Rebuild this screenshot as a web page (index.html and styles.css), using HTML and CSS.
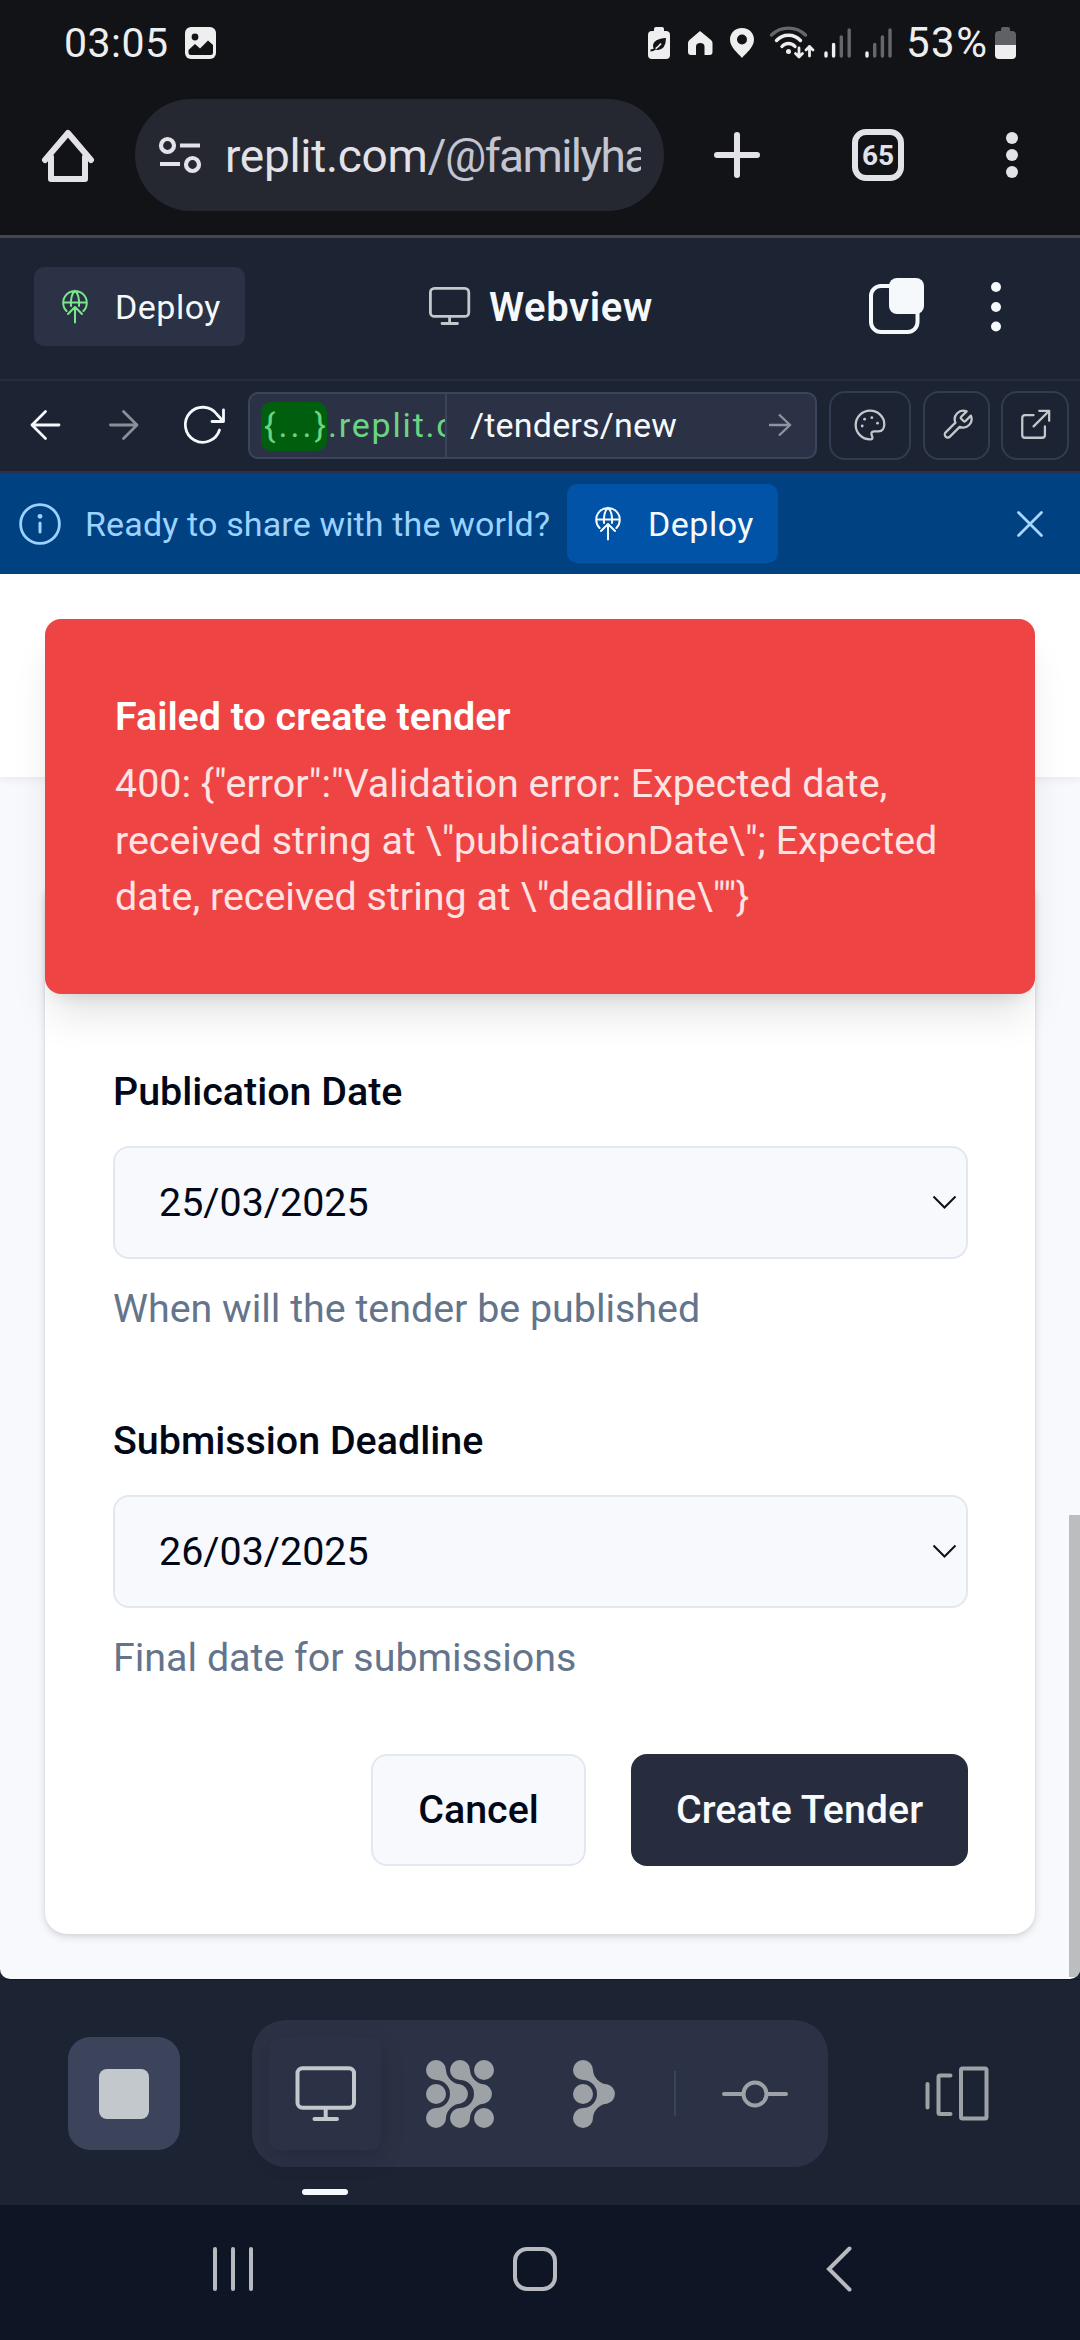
FILE: index.html
```html
<!DOCTYPE html>
<html lang="en">
<head>
<meta charset="utf-8">
<title>Webview</title>
<link rel="stylesheet" href="styles.css">
</head>
<body>
<svg class="defs" width="0" height="0" aria-hidden="true">
  <symbol id="globe" viewBox="0 0 26 35">
    <g fill="none" stroke="currentColor" stroke-width="2" stroke-linecap="round" stroke-linejoin="round">
      <path d="M4.600 22A11.800 11.800 0 1 1 21.400 22M1.500 13.600H24.500M13 1.800C9.500 5 8.500 10 9 17M13 1.800C16.500 5 17.500 10 17 17M13 33.500V18.500M6 25L13 18L20 25"/>
    </g>
  </symbol>
  <symbol id="branch" viewBox="0 0 44 68" overflow="visible">
    <circle cx="10" cy="10" r="10"/><circle cx="10" cy="58" r="10"/>
    <path d="M20 10C20 17 27 24.300 34 24.300A9.900 9.900 0 0 1 34 43.700C27 43.700 20 51 20 58L10 48A14 14 0 0 0 10 20Z"/>
  </symbol>
</svg>

<header class="status">
  <span class="clock">03:05</span>
  <svg class="gallery" width="31" height="32" viewBox="0 0 31 32"><rect width="31" height="32" rx="6" fill="#eee"/><circle cx="10" cy="10" r="3.400" fill="#121317"/><path d="M3.500 23L10 17L15 21.500L23 13.500L28 18V25.500Q28 28 25.500 28H6Q3.500 28 3.500 25.500Z" fill="#121317"/></svg>
  <svg class="tray" width="255" height="36" viewBox="646 25 255 36">
    <g fill="#eee">
      <path d="M654 29Q654 27 656 27H662Q664 27 664 29V31H666Q670 31 670 35V55Q670 59 666 59H652Q648 59 648 55V35Q648 31 652 31H654Z"/>
      <path d="M700 31L711 40Q712.500 41.500 712.500 43V52Q712.500 55 709.500 55H704.500V46.500Q704.500 43 700.200 43Q696 43 696 46.500V55H691Q688 55 688 52V43Q688 41.500 689.500 40Z"/>
      <path fill-rule="evenodd" d="M742 28C734.500 28 730 33.500 730 39.500C730 47.500 738 53 742 58C746 53 754 47.500 754 39.500C754 33.500 749.500 28 742 28ZM742 34.500A5 5 0 1 0 742 44.500A5 5 0 1 0 742 34.500Z"/>
      <circle cx="788.500" cy="51.500" r="2.500"/>
    </g>
    <path d="M666 38C658 38.500 653 41 653 46Q653 50 658 50Q666 49 666 38Z" fill="#121317"/><path d="M650.500 50.500Q656 50 661 43.500" stroke="#eee" stroke-width="1.600" fill="none"/><path d="M650.500 50.500Q653 50.500 655.500 48.500" stroke="#121317" stroke-width="2" fill="none"/>
    <g fill="none" stroke-width="3.400" stroke-linecap="round" stroke-linejoin="round" stroke="#eee">
      <path d="M771.500 35C781 25.800 796 25.800 805.500 35" stroke="#66676a"/>
      <path d="M776.500 40.500C783 33.500 794 33.500 800.500 40.500M782 46.500C785.500 42.500 791.500 42.500 795 46.500"/>
      <path d="M799 48V57M795.500 53.500L799 57L802.500 53.500M809.500 56V46.500M806 50L809.500 46.500L813 50" stroke-width="2.800"/>
      <path d="M826 53V56M833.600 44.500V56" /><path d="M841.300 37V56M849.200 30V56" stroke="#66676a"/>
      <path d="M867 53V56"/><path d="M874.700 44.500V56M882.400 37V56M890 30V56" stroke="#66676a"/>
    </g>
  </svg>
  <span class="percent">53%</span>
  <svg width="21" height="32" viewBox="0 0 21 32"><path d="M6 2Q6 0 8 0H13Q15 0 15 2V4H17Q21 4 21 8V18H0V8Q0 4 4 4H6Z" fill="#606164"/><path d="M0 18H21V28Q21 32 17 32H4Q0 32 0 28Z" fill="#eee"/></svg>
</header>

<nav class="chrome">
  <svg class="home" width="54" height="54" viewBox="41 129 54 54"><path d="M51 158V180H85V158M45 161L68 134L91 161" fill="none" stroke="#e3e2e8" stroke-width="6" stroke-linecap="round" stroke-linejoin="round"/></svg>
  <div class="url">
    <svg width="44" height="38" viewBox="158 137 44 38"><g fill="none" stroke="#e3e2e8" stroke-width="4.200"><circle cx="167.500" cy="146.500" r="6.500"/><circle cx="192.500" cy="165.500" r="6.500"/><path d="M180 146.500H200M160 165H180"/></g></svg>
    <span class="address">replit.com<span class="path">/@familyha</span></span>
  </div>
  <svg class="plus" width="48" height="48" viewBox="0 0 48 48"><path d="M24 4V44M4 24H44" stroke="#e3e2e8" stroke-width="6" stroke-linecap="round"/></svg>
  <span class="tabs">65</span>
  <svg class="more" width="14" height="50" viewBox="0 0 14 50" fill="#e3e2e8"><circle cx="7" cy="8" r="6"/><circle cx="7" cy="25" r="6"/><circle cx="7" cy="42" r="6"/></svg>
</nav>

<div class="titlebar">
  <button class="deploy"><svg class="green" width="26" height="35"><use href="#globe"/></svg>Deploy</button>
  <svg class="screen" width="42" height="39" viewBox="0 0 42 39"><g fill="none" stroke="#c2c8cc" stroke-width="2.800" stroke-linecap="round"><rect x="1.400" y="1.400" width="38.400" height="28" rx="4"/><path d="M20.600 30V36M13 36.500H28.500"/></g></svg>
  <h1>Webview</h1>
  <svg class="copy" width="57" height="60" viewBox="868 277 57 60"><rect x="871" y="286" width="46.500" height="46" rx="10" fill="none" stroke="#f5f9fc" stroke-width="4"/><rect x="889" y="278" width="35" height="36" rx="8" fill="#f5f9fc"/></svg>
  <svg class="dots" width="12" height="52" viewBox="0 0 12 52" fill="#f5f9fc"><circle cx="6" cy="6" r="5"/><circle cx="6" cy="26" r="5"/><circle cx="6" cy="45.500" r="5"/></svg>
</div>

<div class="browse">
  <svg class="ctl" width="197" height="42" viewBox="30 406 197 42"><g fill="none" stroke-width="2.800" stroke-linecap="round" stroke-linejoin="round"><path d="M59 427H32M45.500 413.500L32 427L45.500 440.500" stroke="#f5f9fc"/><path d="M110.500 427H137M123.500 413.500L137 427L123.500 440.500" stroke="#8b8f99"/><path d="M219.500 432A17.500 17.500 0 1 1 217 416.500L223 423M223.500 412V423.500H212" stroke="#f5f9fc"/></g></svg>
  <div class="field">
    <div class="host"><span class="chip">{...}</span>.replit.c</div>
    <div class="route">/tenders/new<svg width="24" height="24" viewBox="0 0 24 24"><path d="M1 12H22M11 1.500L22 12L11 22.500" fill="none" stroke="#8f949e" stroke-width="2.300"/></svg></div>
  </div>
  <span class="tool wide"><svg width="34" height="34" viewBox="0 0 24 24"><path d="M12 1.900a10.100 10.100 0 1 0 0 20.200c1.500.3 2-.8 1.600-1.800-.9-2-1-3.800 1.300-3.800H18c2.700 0 4.100-2.200 4.100-5C22.100 6 17.500 1.900 12 1.900Z"/><g class="specks"><circle cx="8.200" cy="7.900" r="1"/><circle cx="13.300" cy="6.800" r="1"/><circle cx="17.300" cy="10.700" r="1"/><circle cx="6.500" cy="12.700" r="1"/></g></svg></span>
  <span class="tool mid"><svg width="34" height="34" viewBox="0 0 24 24"><path d="M15 6.200a1 1 0 0 0 0 1.400l1.600 1.600a1 1 0 0 0 1.400 0l3.800-3.800a6 6 0 0 1-7.900 7.900l-6.900 6.900a2.100 2.100 0 0 1-3-3l6.900-6.900a6 6 0 0 1 7.900-7.900Z"/></svg></span>
  <span class="tool end"><svg width="34" height="34" viewBox="0 0 24 24"><path d="M19 13v6a2 2 0 0 1-2 2H5a2 2 0 0 1-2-2V7a2 2 0 0 1 2-2h6M15 2h7v7M11 13 21.500 2.500"/></svg></span>
</div>

<div class="notice">
  <svg width="42" height="42" viewBox="0 0 42 42"><circle cx="21" cy="21" r="19.400" fill="none" stroke="#9cd2ff" stroke-width="2.800"/><circle cx="21" cy="13.300" r="2.400" fill="#9cd2ff"/><path d="M21 20V29" stroke="#9cd2ff" stroke-width="3" stroke-linecap="round"/></svg>
  <span class="share">Ready to share with the world?</span>
  <button class="deploy blue"><svg width="26" height="35"><use href="#globe"/></svg>Deploy</button>
  <svg class="close" width="28" height="28" viewBox="0 0 28 28"><path d="M2.500 2.500L25.500 25.500M25.500 2.500L2.500 25.500" stroke="#a8d6ff" stroke-width="2.800" stroke-linecap="round"/></svg>
</div>

<div class="frame">
  <div class="view">
    <div class="apphead"></div>
    <form class="card">
      <label>Publication Date</label>
      <div class="date">25/03/2025<svg width="25" height="15" viewBox="0 0 25 15"><path d="M1.500 1.500L12.500 12.500L23.500 1.500" fill="none" stroke="#111" stroke-width="2"/></svg></div>
      <p>When will the tender be published</p>
      <label>Submission Deadline</label>
      <div class="date">26/03/2025<svg width="25" height="15" viewBox="0 0 25 15"><path d="M1.500 1.500L12.500 12.500L23.500 1.500" fill="none" stroke="#111" stroke-width="2"/></svg></div>
      <p>Final date for submissions</p>
      <div class="actions"><button class="btn" type="button">Cancel</button><button class="btn primary" type="button">Create Tender</button></div>
    </form>
    <div class="toast" role="alert">
      <strong>Failed to create tender</strong>
      <div class="detail">400: {"error":"Validation error: Expected date,<br>received string at \"publicationDate\"; Expected<br>date, received string at \"deadline\""}</div>
    </div>
    <div class="thumb"></div>
  </div>
</div>

<div class="dock">
  <span class="stop"><span class="square"></span></span>
  <div class="group">
    <span class="selected"><svg width="61" height="58" viewBox="294 2065 61 58"><g fill="none" stroke="#c2c8cc" stroke-width="4" stroke-linecap="round"><rect x="296.500" y="2068.300" width="56.500" height="39.500" rx="5"/><path d="M324.700 2109V2118M313.500 2119H336"/></g></svg></span>
    <svg class="grid" width="68" height="68" viewBox="0 0 68 68" fill="#9da2a6"><use href="#branch" width="44" height="68"/><use href="#branch" x="24" width="44" height="68"/><circle cx="10" cy="34" r="10"/><circle cx="58" cy="10" r="10"/><circle cx="58" cy="58" r="10"/></svg>
    <svg class="tree" width="44" height="68" viewBox="0 0 44 68" fill="#9da2a6"><use href="#branch" width="44" height="68"/><circle cx="10" cy="34" r="10"/></svg>
    <span class="rule"></span>
    <svg class="commit" width="66" height="30" viewBox="0 0 66 30"><g fill="none" stroke="#9da2a6" stroke-width="4" stroke-linecap="round"><circle cx="33" cy="15" r="11.500"/><path d="M2 15H20M46 15H64"/></g></svg>
  </div>
  <svg class="panes" width="66" height="58" viewBox="924 2065 66 58"><g fill="none" stroke="#9da2a6" stroke-width="4" stroke-linecap="round" stroke-linejoin="round"><rect x="961" y="2068.500" width="25.500" height="50" rx="1.500"/><path d="M950.500 2075.500H940Q938.500 2075.500 938.500 2077V2112.500Q938.500 2114 940 2114H950.500M927.500 2084V2107.500"/></g></svg>
  <span class="indicator"></span>
</div>

<footer class="system">
  <svg width="40" height="44" viewBox="0 0 40 44"><path d="M2 2V42M20 2V42M38 2V42" stroke="#b9bac0" stroke-width="4" stroke-linecap="round"/></svg>
  <svg class="s2" width="44" height="44" viewBox="0 0 44 44"><rect x="2" y="2" width="40" height="40" rx="12" fill="none" stroke="#b9bac0" stroke-width="4"/></svg>
  <svg class="s3" width="26" height="46" viewBox="0 0 26 46"><path d="M23.500 2.500L3 23L23.500 43.500" fill="none" stroke="#b9bac0" stroke-width="4" stroke-linecap="round"/></svg>
</footer>
</body>
</html>
```
FILE: styles.css
```css
* { box-sizing: border-box; }
body {
  margin: 0;
  width: 1080px;
  height: 2340px;
  overflow: hidden;
  background: #121317;
  font-family: Roboto, "Liberation Sans", sans-serif;
}
svg { display: block; flex: none; }
.defs { position: absolute; }
button { border: 0; font: inherit; color: inherit; padding: 0; }

.status { display: flex; align-items: center; height: 85px; padding-left: 64px; color: #eee; font-size: 41px; white-space: nowrap; }
.clock { width: 121px; letter-spacing: .5px; }
.tray { margin-left: 430px; }
.percent { width: 94px; padding-left: 5px; font-size: 42px; letter-spacing: 1.500px; }

.chrome { display: flex; align-items: center; height: 153px; padding: 0 0 11px 41px; border-bottom: 3px solid #45474e; }
.url { display: flex; align-items: center; width: 529px; height: 112px; border-radius: 56px; margin-left: 40px; padding-left: 23px; background: #252830; }
.address { width: 416px; margin-left: 23px; padding-top: 3px; overflow: hidden; white-space: nowrap; font-size: 46px; line-height: 60px; letter-spacing: -.300px; color: #e3e2e8; }
.path { color: #c3c5d0; letter-spacing: -1.600px; }
.plus { margin-left: 49px; }
.tabs { width: 52px; height: 52px; margin-left: 91px; border: 6px solid #e3e2e8; border-radius: 14px; color: #e3e2e8; font-size: 28px; font-weight: 700; line-height: 41px; text-align: center; }
.more { margin-left: 101px; }

.titlebar { display: flex; align-items: center; height: 143px; padding: 0 0 4px 34px; background: #1c2333; border-bottom: 2px solid #262d3d; }
.deploy { display: flex; align-items: center; width: 211px; height: 79px; padding-left: 28px; gap: 27px; border-radius: 10px; background: #2b3245; color: #f5f9fc; font-size: 34px; letter-spacing: .5px; }
.green { color: #79e78b; }
.screen { margin-left: 184px; }
.titlebar h1 { width: 180px; margin: 3px 0 0 18px; font-size: 40px; font-weight: 600; line-height: 50px; letter-spacing: .6px; color: #f5f9fc; }
.copy { margin-left: 199px; }
.dots { margin-left: 65px; }

.browse { display: flex; align-items: center; height: 92px; padding: 0 0 2px 30px; background: #1c2333; border-bottom: 2px solid #2b3245; }
.field { display: flex; width: 569px; height: 67px; margin-left: 21px; border: 2px solid #3c445c; border-radius: 10px; background: #2b3245; font-size: 34px; line-height: 63px; white-space: nowrap; }
.host { width: 197px; padding-left: 11px; overflow: hidden; border-right: 2px solid #3c445c; color: #6cd481; letter-spacing: 1.800px; }
.chip { display: inline-block; width: 66px; height: 49px; margin-right: 1px; border-radius: 10px; line-height: 47px; text-align: center; letter-spacing: 3px; text-indent: 3px; background: #005f0e; }
.route { display: flex; align-items: center; justify-content: space-between; flex: 1; padding: 0 23px 0 23px; color: #f5f9fc; letter-spacing: .2px; }
.tool { display: flex; align-items: center; justify-content: center; height: 69px; border: 2px solid #333b50; border-radius: 16px; }
.tool svg { fill: none; stroke: #c2c8cc; stroke-width: 1.600; stroke-linecap: round; stroke-linejoin: round; }
.tool .specks { fill: #c2c8cc; stroke: none; }
.wide { width: 82px; margin-left: 12px; }
.mid { width: 67px; margin-left: 12px; }
.end { width: 68px; margin-left: 11px; }

.notice { display: flex; align-items: center; height: 101px; padding-left: 19px; background: #004182; }
.share { width: 482px; margin-left: 24px; color: #9cd2ff; font-size: 34px; white-space: nowrap; letter-spacing: .15px; }
.blue { background: #0053a6; }
.close { margin-left: 238px; }

.frame { height: 1405px; background: #1c2333; }
.view { position: relative; height: 1405px; overflow: hidden; border-radius: 0 0 10px 10px; background: #f8f9fd; }
.apphead { height: 203px; background: #fff; box-shadow: 0 3px 8px rgba(0, 0, 0, .06); }
.card { width: 990px; height: 1057px; margin: 100px 45px 0; padding: 187px 68px 0; border-radius: 22px; background: #fff; box-shadow: 0 3px 8px rgba(0, 0, 0, .13), 0 1px 4px rgba(0, 0, 0, .06); font-size: 39.400px; line-height: 56px; color: #020817; }
.card label { display: block; font-weight: 500; margin-bottom: 26px; }
.date { display: flex; align-items: center; justify-content: space-between; width: 855px; height: 113px; padding: 0 9px 0 44px; border: 2px solid #e2e8f0; border-radius: 16px; background: #f8f9fd; }
.card p { margin: 22px 0 76px; color: #64748b; }
.card p + .actions { margin-top: -8px; }
.actions { display: flex; justify-content: flex-end; width: 855px; gap: 45px; }
.btn { width: 215px; height: 112px; border: 2px solid #e2e8f0; border-radius: 16px; background: #f8f9fd; font-weight: 500; }
.primary { width: 337px; border: 0; background: #272d3f; color: #f8fafc; }
.toast { position: absolute; left: 45px; top: 45px; width: 990px; height: 375px; padding: 70px; border-radius: 16px; background: #ef4444; box-shadow: 0 28px 42px -8px rgba(0, 0, 0, .11), 0 11px 17px -11px rgba(0, 0, 0, .15); color: #fff; font-size: 39.400px; line-height: 56.250px; white-space: nowrap; }
.toast strong { display: block; font-weight: 600; margin-bottom: 11px; }
.detail { color: #fde4e4; }
.thumb { position: absolute; right: 0; top: 941px; width: 11px; height: 462px; background: #bbbdbf; }

.dock { position: relative; display: flex; height: 226px; padding: 41px 0 0 68px; background: #1c2333; border-top: 1px solid #121828; }
.stop { display: flex; align-items: center; justify-content: center; width: 112px; height: 113px; margin-top: 16px; border-radius: 22px; background: #3c445c; }
.square { width: 50px; height: 50px; border-radius: 8px; background: #c2c8cc; }
.group { display: flex; align-items: center; width: 576px; height: 147px; margin: -1px 0 0 72px; padding-left: 17px; border-radius: 34px; background: #2b3245; }
.selected { display: flex; align-items: center; justify-content: center; width: 112px; height: 113px; border-radius: 11px; background: #2b3245; box-shadow: 0 8px 24px rgba(2, 8, 23, .16); }
.grid { margin-left: 45px; }
.tree { margin-left: 79px; }
.rule { width: 2px; height: 45px; margin-left: 57px; background: #3c445c; }
.commit { margin-left: 46px; }
.panes { margin: 44px 0 0 96px; }
.indicator { position: absolute; left: 302px; bottom: 10px; width: 46px; height: 6px; border-radius: 3px; background: #f5f9fc; }

.system { display: flex; align-items: center; height: 135px; padding: 0 0 8px 213px; background: #0e1525; }
.s2 { margin-left: 260px; }
.s3 { margin-left: 269px; }
```
